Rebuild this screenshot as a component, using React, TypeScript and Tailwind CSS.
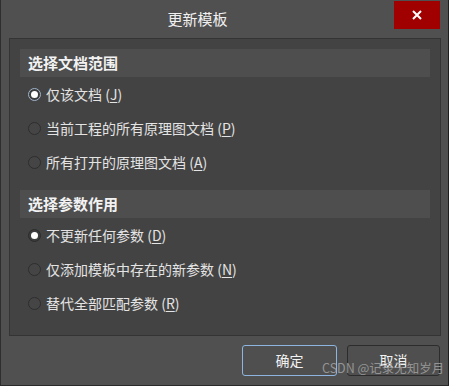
const font = { fontFamily: '"Noto Sans CJK SC", "Noto Sans", sans-serif' }

interface OptionProps {
  label: string
  hotkey: string
  checked?: boolean
  focused?: boolean
}

const Radio = ({ checked = false, focused = false }: { checked?: boolean; focused?: boolean }) => (
  <span
    className={`flex h-[13px] w-[13px] shrink-0 items-center justify-center rounded-full border ${
      checked
        ? focused
          ? 'border-[#9fb4cc] bg-[#3c3c3c]'
          : 'border-[#2c2c2c] bg-[#3c3c3c]'
        : 'border-[#2e2e2e] bg-[#454545]'
    }`}
  >
    {checked && <span className="h-[7px] w-[7px] rounded-full bg-white" />}
  </span>
)

const Option = ({ label, hotkey, checked, focused }: OptionProps) => (
  <div className="flex h-[34px] items-center gap-[5px] pl-[8px] text-[14px] text-[#e4e4e4]">
    <Radio checked={checked} focused={focused} />
    <span>
      {label} (<span className="underline underline-offset-2">{hotkey}</span>)
    </span>
  </div>
)

const SectionHeader = ({ title }: { title: string }) => (
  <div className="flex h-[28px] items-center bg-[#4e4e4e] pl-[8px] text-[15px] font-bold text-[#f2f2f2]">
    {title}
  </div>
)

export default function App() {
  return (
    <div
      className="relative h-[386px] w-[449px] overflow-hidden border-b border-l border-r border-b-[#2a2a2a] border-l-[#2e2e2e] border-r-[#1e1e1e] bg-[#505050]"
      style={font}
    >
      {/* title bar */}
      <div className="flex h-[38px] items-start">
        <div className="flex-1 pt-[8px] text-center text-[15px] text-[#f0f0f0]">更新模板</div>
        <div className="mr-[8px] mt-[1px] flex h-[28px] w-[46px] items-center justify-center bg-[#a00000]">
          <svg width="10" height="10" viewBox="0 0 10 10">
            <path d="M1 1 L9 9 M9 1 L1 9" stroke="white" strokeWidth="2" />
          </svg>
        </div>
      </div>

      {/* options panel */}
      <div className="ml-[8px] h-[298px] w-[432px] border border-[#343434] bg-[#434343] px-[10px] pt-[10px]">
        <SectionHeader title="选择文档范围" />
        <Option label="仅该文档" hotkey="J" checked focused />
        <Option label="当前工程的所有原理图文档" hotkey="P" />
        <Option label="所有打开的原理图文档" hotkey="A" />

        <div className="mt-[11px]">
          <SectionHeader title="选择参数作用" />
        </div>
        <Option label="不更新任何参数" hotkey="D" checked />
        <Option label="仅添加模板中存在的新参数" hotkey="N" />
        <Option label="替代全部匹配参数" hotkey="R" />
      </div>

      {/* buttons */}
      <div className="mr-[8px] mt-[9px] flex justify-end gap-[10px]">
        <button className="h-[31px] w-[95px] rounded-[3px] border border-[#8db5e0] bg-[#4f4f4f] text-[14px] text-[#f2f2f2]">
          确定
        </button>
        <button className="h-[31px] w-[93px] rounded-[3px] border border-[#2c2c2c] bg-[#4f4f4f] text-[14px] text-[#f2f2f2]">
          取消
        </button>
      </div>

      {/* watermark */}
      <div className="absolute left-[321px] top-[362px] whitespace-nowrap text-[12.5px] leading-none text-[#a8a8a8]/80">
        CSDN @记录无知岁月
      </div>
    </div>
  )
}
